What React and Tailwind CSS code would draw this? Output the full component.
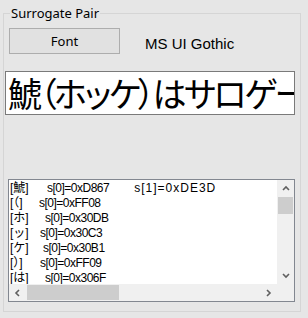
const rows = [
  { ch: "[鯱]", w: "w-[37px]", text: "s[0]=0xD867", extra: "s[1]=0xDE3D" },
  { ch: "[（]", w: "w-[29px]", text: "s[0]=0xFF08" },
  { ch: "[ホ]", w: "w-[35px]", text: "s[0]=0x30DB" },
  { ch: "[ッ]", w: "w-[30px]", text: "s[0]=0x30C3" },
  { ch: "[ケ]", w: "w-[33px]", text: "s[0]=0x30B1" },
  { ch: "[）]", w: "w-[30px]", text: "s[0]=0xFF09" },
  { ch: "[は]", w: "w-[35px]", text: "s[0]=0x306F" },
];

const Chevron = ({ dir }) => {
  const paths = {
    up: "M1 5 L4 2 L7 5",
    down: "M1 2 L4 5 L7 2",
    left: "M5 1 L2 4 L5 7",
    right: "M2 1 L5 4 L2 7",
  };
  const vertical = dir === "up" || dir === "down";
  return (
    <svg
      width={vertical ? 8 : 7}
      height={vertical ? 7 : 8}
      viewBox={vertical ? "0 0 8 7" : "0 0 7 8"}
      fill="none"
      stroke="#606060"
      strokeWidth="1.6"
    >
      <path d={paths[dir]} />
    </svg>
  );
};

const App = () => {
  return (
    <div className="w-[308px] h-[318px] bg-[#e6e6e6] pt-[5px] overflow-hidden">
      {/* Group box */}
      <fieldset className="ml-[3px] w-[298px] border border-[#d5d5d5] pb-[9px]">
        <legend className="ml-[6px] px-[1px] text-[13px] leading-[16px] text-black font-['Noto_Sans',sans-serif]">
          Surrogate Pair
        </legend>

        {/* Font button row */}
        <div className="mt-[7px] flex items-start">
          <button className="ml-[5px] w-[111px] h-[26px] border border-[#adadad] bg-[#e1e1e1] text-[13px] leading-[24px] text-black font-['Noto_Sans',sans-serif]">
            Font
          </button>
          <span className="ml-[25px] mt-[3px] text-[15px] leading-[25px] text-black font-['Liberation_Sans',sans-serif]">
            MS UI Gothic
          </span>
        </div>

        {/* Preview text box */}
        <div className="ml-[1px] mt-[15px] w-[290px] h-[44px] border border-[#7a7a7a] bg-white overflow-hidden pl-[2px] flex items-center">
          <span className="whitespace-nowrap text-[34px] leading-[42px] tracking-[-2.5px] text-black font-['Noto_Sans_CJK_JP',sans-serif] [font-feature-settings:'palt']">
            鯱（ホッケ）はサロゲー
          </span>
        </div>

        {/* List box */}
        <div className="ml-[4px] mt-[64px] w-[287px] h-[123px] border border-[#828790] bg-white flex flex-col">
          <div className="flex flex-1 min-h-0">
            <div className="flex-1 overflow-hidden pl-[1px] pt-[1px] flex flex-col text-[12px] leading-[15px] text-black font-['Liberation_Sans','Noto_Sans_CJK_JP',sans-serif]">
              {rows.map((row, i) => (
                <div key={i} className="flex whitespace-nowrap shrink-0">
                  <span className={row.w}>{row.ch}</span>
                  <span className="tracking-[-0.5px]">{row.text}</span>
                  {row.extra && (
                    <span className="ml-[25px] tracking-[1px]">{row.extra}</span>
                  )}
                </div>
              ))}
            </div>
            {/* Vertical scrollbar */}
            <div className="w-[17px] bg-[#f0f0f0] flex flex-col items-center">
              <div className="h-[17px] flex items-center justify-center">
                <Chevron dir="up" />
              </div>
              <div className="w-[15px] h-[17px] bg-[#cdcdcd]" />
              <div className="flex-1" />
              <div className="h-[17px] flex items-center justify-center">
                <Chevron dir="down" />
              </div>
            </div>
          </div>
          {/* Horizontal scrollbar */}
          <div className="h-[17px] bg-[#f0f0f0] flex items-center">
            <div className="w-[17px] h-[17px] flex items-center justify-center">
              <Chevron dir="left" />
            </div>
            <div className="ml-[1px] w-[92px] h-[15px] bg-[#cdcdcd]" />
            <div className="flex-1" />
            <div className="w-[17px] h-[17px] flex items-center justify-center">
              <Chevron dir="right" />
            </div>
            <div className="w-[17px] h-[17px]" />
          </div>
        </div>
      </fieldset>
    </div>
  );
};

export default App;
